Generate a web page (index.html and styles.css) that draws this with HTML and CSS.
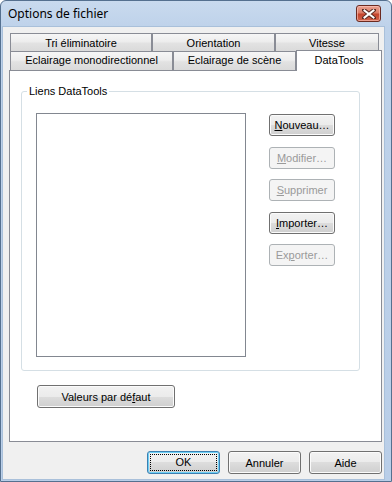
FILE: index.html
```html
<!DOCTYPE html>
<html lang="fr">
<head>
<meta charset="utf-8">
<title>Options de fichier</title>
<link rel="stylesheet" href="styles.css">
</head>
<body>
<div class="window">
  <div class="titlebar">
    <span class="title">Options de fichier</span>
    <div class="close">
      <svg width="14" height="10" viewBox="0 0 14 10">
        <path d="M2 1 L12 9 M12 1 L2 9" stroke="#5a2a22" stroke-width="4" stroke-linecap="square"/>
        <path d="M2.5 1.5 L11.5 8.5 M11.5 1.5 L2.5 8.5" stroke="#ffffff" stroke-width="2" stroke-linecap="square"/>
      </svg>
    </div>
  </div>
  <div class="client">
    <div class="tabs">
      <div class="tabrow back">
        <div class="tab t1">Tri éliminatoire</div>
        <div class="tab t2">Orientation</div>
        <div class="tab t3">Vitesse</div>
      </div>
      <div class="tabrow front">
        <div class="tab t4">Eclairage monodirectionnel</div>
        <div class="tab t5">Eclairage de scène</div>
        <div class="tab t6 selected">DataTools</div>
      </div>
    </div>
    <div class="panel">
      <div class="group">
        <span class="group-label">Liens DataTools</span>
        <div class="listbox"></div>
        <div class="btncol">
          <button class="btn side"><u>N</u>ouveau…</button>
          <button class="btn side" disabled><u>M</u>odifier…</button>
          <button class="btn side" disabled><u>S</u>upprimer</button>
          <button class="btn side"><u>I</u>mporter…</button>
          <button class="btn side" disabled>Ex<u>p</u>orter…</button>
        </div>
      </div>
      <button class="btn defaults">Valeurs par dé<u>f</u>aut</button>
    </div>
    <div class="footer">
      <button class="btn dlg default"><span class="focus">OK</span></button>
      <button class="btn dlg">Annuler</button>
      <button class="btn dlg">Aide</button>
    </div>
  </div>
</div>
</body>
</html>
```
FILE: styles.css
```css
* { box-sizing: border-box; }

body {
  margin: 0;
  width: 392px;
  height: 482px;
  overflow: hidden;
  font-family: "Liberation Sans", Arial, sans-serif;
  font-size: 11px;
  color: #000;
  background: #fff;
}

.window {
  height: 482px;
  display: flex;
  flex-direction: column;
  border: 1px solid #55708f;
  border-radius: 6px 6px 0 0;
  background: linear-gradient(to bottom, #c9daee 0px, #bed2ea 27px, #b9cee8 100%);
}

.titlebar {
  height: 26px;
  flex: none;
  display: flex;
  align-items: flex-start;
  justify-content: space-between;
  padding: 0 10px 0 7px;
}

.title {
  font-family: "Noto Sans", "Open Sans", sans-serif;
  font-size: 12px;
  line-height: 26px;
  color: #000;
}

.close {
  margin-top: 4px;
  width: 25px;
  height: 17px;
  border: 1px solid #6b2a20;
  border-radius: 3px;
  background: linear-gradient(to bottom, #e9a192 0%, #dc7c66 45%, #c4432b 55%, #d0654c 100%);
  box-shadow: inset 0 0 0 1px rgba(255, 200, 190, 0.6);
  display: flex;
  align-items: center;
  justify-content: center;
}

.client {
  flex: 1;
  margin: 0 7px 2px 2px;
  background: #f0f0f0;
  padding: 6px 2px 0 6px;
  display: flex;
  flex-direction: column;
  box-shadow: 0 0 0 1px #a9c0da;
}

.tabs {
  padding-left: 1px;
}

.tabrow {
  display: flex;
}

.tabrow.back {
  height: 18px;
}

.tabrow.front {
  height: 19px;
  align-items: flex-end;
}

.tab {
  height: 100%;
  border: 1px solid #898c95;
  border-bottom: none;
  background: linear-gradient(to bottom, #f6f6f6 0%, #ededed 45%, #e2e2e2 55%, #dadada 100%);
  text-align: center;
  line-height: 17px;
  white-space: nowrap;
}

.back .tab { line-height: 18px; }

.t1 { width: 142px; }
.t2 { width: 123px; }
.t3 { width: 104px; }
.t4 { width: 163px; }
.t5 { width: 123px; }

.tab.selected {
  width: 86px;
  height: 21px;
  margin-bottom: -1px;
  background: #fff;
  position: relative;
  z-index: 1;
  line-height: 18px;
}

.panel {
  height: 372px;
  border: 1px solid #898c95;
  background: #fff;
  padding: 20px 0 0 11px;
  flex: none;
}

.group {
  position: relative;
  width: 339px;
  height: 280px;
  border: 1px solid #d5dfe5;
  border-radius: 3px;
  box-shadow: inset 0 0 0 1px #ffffff;
  display: flex;
  padding: 21px 0 0 14px;
}

.group-label {
  position: absolute;
  top: -8px;
  left: 5px;
  padding: 0 2px;
  background: #fff;
  line-height: 14px;
}

.listbox {
  width: 210px;
  height: 244px;
  border: 1px solid #828790;
  background: #fff;
}

.btncol {
  margin: 1px 0 0 23px;
  display: flex;
  flex-direction: column;
  gap: 10.5px;
}

.btn {
  font-family: "Liberation Sans", Arial, sans-serif;
  font-size: 11px;
  color: #000;
  border: 1px solid #707070;
  border-radius: 3px;
  background: linear-gradient(to bottom, #f2f2f2 0%, #ebebeb 50%, #dddddd 50%, #cfcfcf 100%);
  box-shadow: inset 0 0 0 1px #fbfbfb;
  padding: 0;
  margin: 0;
  height: 22px;
  line-height: 18px;
  text-align: center;
}

.btn:disabled {
  border-color: #adb2b5;
  background: #f4f4f4;
  color: #9a9a9a;
  box-shadow: none;
}

.side {
  width: 66px;
}

.defaults {
  margin: 14px 0 0 16px;
  width: 138px;
  height: 23px;
  display: block;
}

.footer {
  display: flex;
  justify-content: flex-end;
  gap: 8px;
  margin-top: 9px;
}

.dlg {
  width: 73px;
  height: 23px;
}

.default {
  border-color: #3c7fb1;
  box-shadow: inset 0 0 0 1px #6ed0f6;
  padding: 2px;
  display: flex;
}

.focus {
  flex: 1;
  border: 1px dotted #000;
  line-height: 15px;
}
```
